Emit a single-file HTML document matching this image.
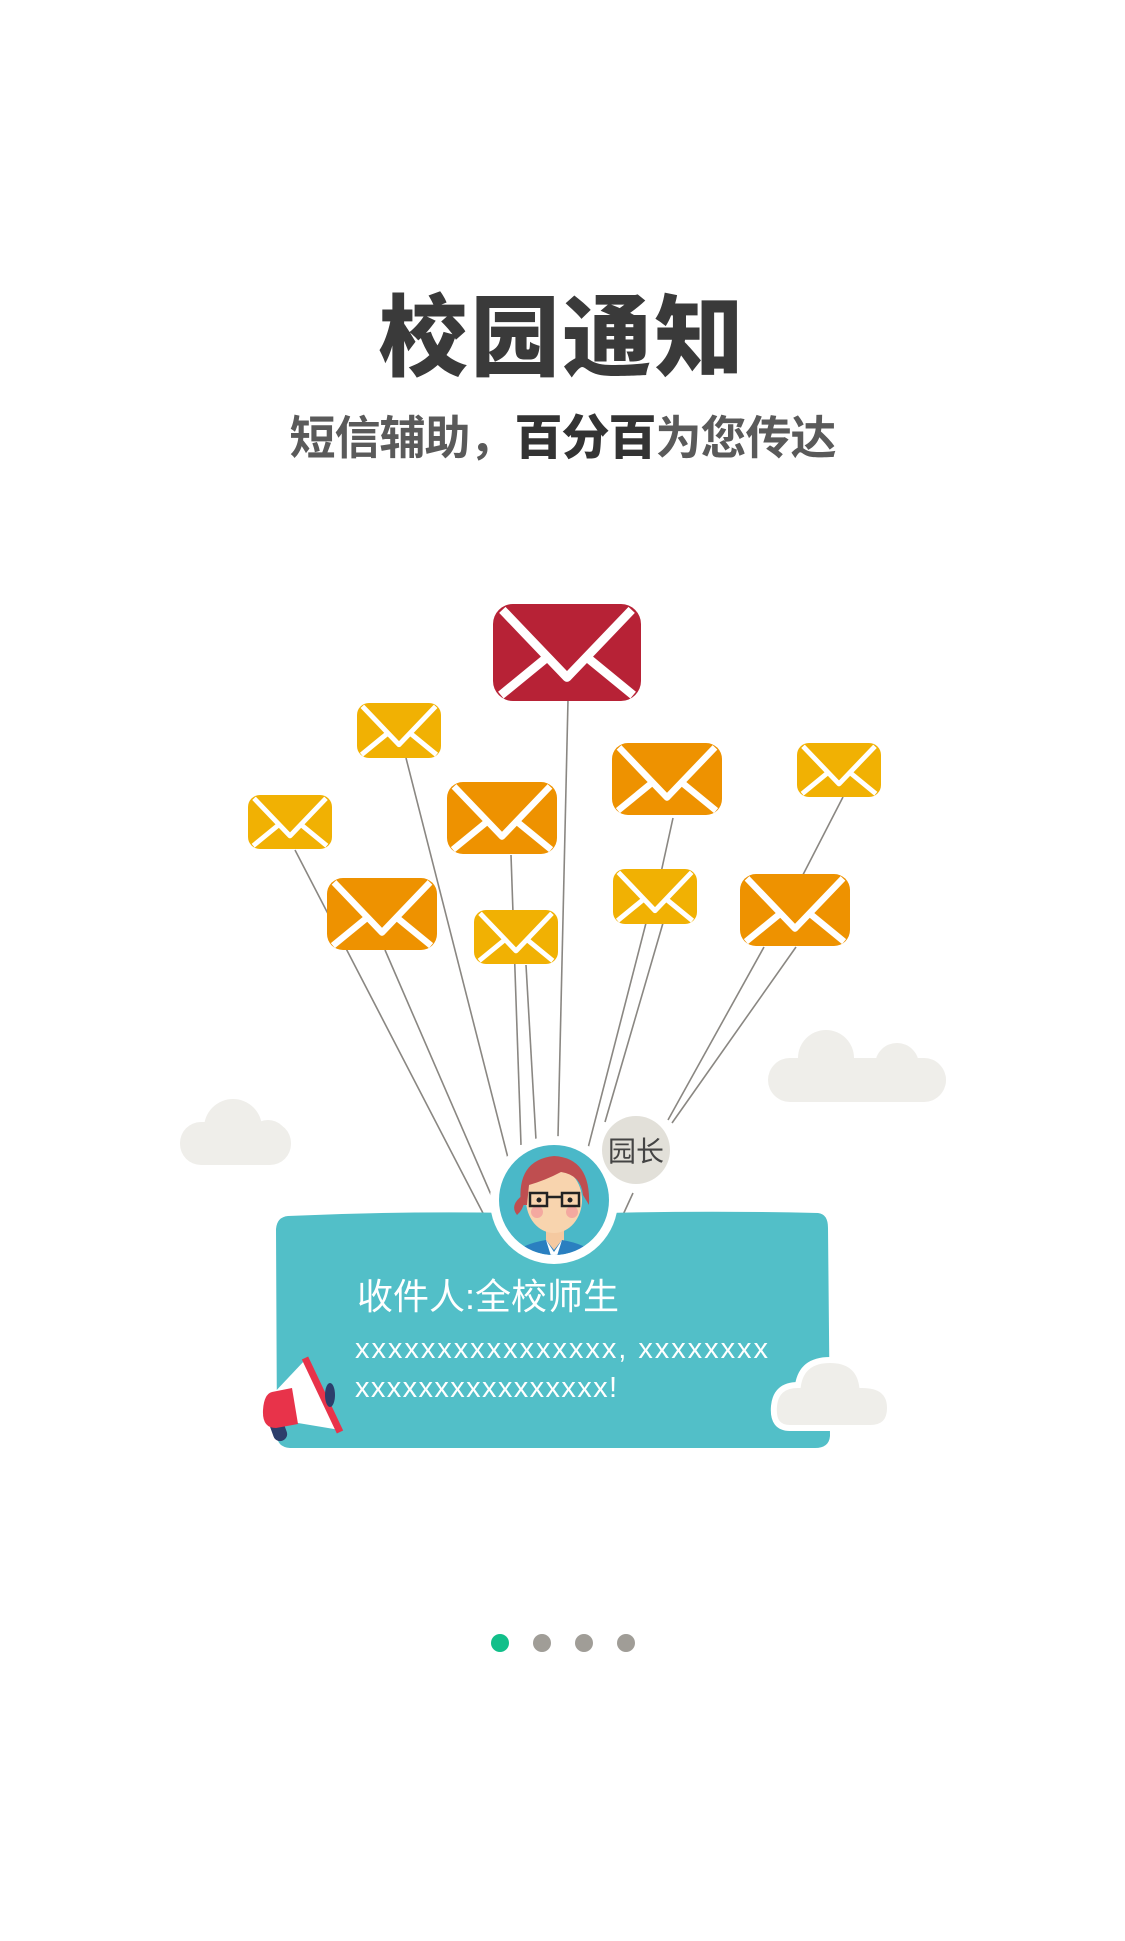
<!DOCTYPE html>
<html><head><meta charset="utf-8">
<style>
html,body{margin:0;padding:0;background:#fff;}
body{width:1125px;height:1941px;position:relative;overflow:hidden;font-family:"Liberation Sans","Noto Sans CJK SC",sans-serif;}
.t{position:absolute;left:0;width:1125px;text-align:center;}
#title{top:266px;font-size:89px;font-weight:900;color:#3a3a3a;letter-spacing:3px;}
#sub{top:398px;font-size:46px;font-weight:bold;color:#5a5a5a;letter-spacing:-1px;}
#sub b{color:#333;font-size:48px;}
svg{position:absolute;left:0;top:0;}
</style></head><body>
<div class="t" id="title">校园通知</div>
<div class="t" id="sub">短信辅助，<b>百分百</b>为您传达</div>
<svg width="1125" height="1941" viewBox="0 0 1125 1941">
<defs>
<symbol id="env" viewBox="0 0 100 66">
<path d="M6 4 L50 50 L94 4 M5 62 L38 35 M95 62 L62 35" stroke="#fff" stroke-width="6" fill="none" stroke-linejoin="round"/>
</symbol>
</defs>
<g stroke="#8a8782" stroke-width="1.6" fill="none">
<line x1="295" y1="850" x2="485" y2="1217"/>
<line x1="385" y1="950" x2="492" y2="1197"/>
<line x1="406" y1="758" x2="508" y2="1158"/>
<line x1="511" y1="855" x2="521" y2="1145"/>
<line x1="526" y1="965" x2="536" y2="1140"/>
<line x1="568" y1="700" x2="558" y2="1137"/>
<line x1="646" y1="923" x2="588" y2="1148"/>
<line x1="663" y1="923" x2="605" y2="1122"/>
<line x1="673" y1="818" x2="655" y2="900"/>
<line x1="843" y1="797" x2="790" y2="900"/>
<line x1="764" y1="947" x2="668" y2="1120"/>
<line x1="796" y1="947" x2="672" y2="1123"/>
<line x1="633" y1="1193" x2="622" y2="1217"/>
</g>
<!-- envelopes -->
<g>
<rect x="493" y="604" width="148" height="97" rx="20" fill="#b72236"/><use href="#env" x="493" y="604" width="148" height="97"/>
<rect x="357" y="703" width="84" height="55" rx="12" fill="#f1b103"/><use href="#env" x="357" y="703" width="84" height="55"/>
<rect x="248" y="795" width="84" height="54" rx="12" fill="#f1b103"/><use href="#env" x="248" y="795" width="84" height="54"/>
<rect x="447" y="782" width="110" height="72" rx="16" fill="#ee9200"/><use href="#env" x="447" y="782" width="110" height="72"/>
<rect x="612" y="743" width="110" height="72" rx="16" fill="#ee9200"/><use href="#env" x="612" y="743" width="110" height="72"/>
<rect x="474" y="910" width="84" height="54" rx="12" fill="#f1b103"/><use href="#env" x="474" y="910" width="84" height="54"/>
<rect x="613" y="869" width="84" height="55" rx="12" fill="#f1b103"/><use href="#env" x="613" y="869" width="84" height="55"/>
<rect x="797" y="743" width="84" height="54" rx="12" fill="#f1b103"/><use href="#env" x="797" y="743" width="84" height="54"/>
<rect x="327" y="878" width="110" height="72" rx="16" fill="#ee9200"/><use href="#env" x="327" y="878" width="110" height="72"/>
<rect x="740" y="874" width="110" height="72" rx="16" fill="#ee9200"/><use href="#env" x="740" y="874" width="110" height="72"/>
</g>
<!-- clouds -->
<g fill="#efeeea">
<rect x="180" y="1122" width="111" height="43" rx="21"/><circle cx="233" cy="1128" r="29"/><circle cx="268" cy="1140" r="20"/>
<rect x="768" y="1058" width="178" height="44" rx="22"/><circle cx="826" cy="1058" r="28"/><circle cx="897" cy="1065" r="22"/><circle cx="928" cy="1080" r="18"/>
</g>
<!-- card -->
<path d="M288 1216 Q420 1210 560 1214 Q700 1210 818 1213 Q828 1214 828 1228 L830 1436 Q829 1448 815 1448 L290 1448 Q277 1447 277 1435 L276 1229 Q277 1217 288 1216Z" fill="#52bfc8"/>
<text x="357" y="1309" font-size="36" fill="#fff" font-family="Liberation Sans,Noto Sans CJK SC,sans-serif">收件人:全校师生</text>
<text x="355" y="1358" font-size="29" fill="#fff" font-family="Liberation Sans,sans-serif" textLength="413">xxxxxxxxxxxxxxxx, xxxxxxxx</text>
<text x="355" y="1397" font-size="29" fill="#fff" font-family="Liberation Sans,sans-serif" textLength="262">xxxxxxxxxxxxxxxx!</text>
<!-- cloud bottom right -->
<g fill="#efeeea" stroke="#fff" stroke-width="6">
<path d="M790 1428 Q772 1428 774 1406 Q776 1385 798 1385 Q802 1360 830 1360 Q858 1360 862 1385 Q890 1385 890 1408 Q890 1428 870 1428Z"/>
</g>
<!-- megaphone -->
<g>
<rect x="268" y="1400" width="14" height="42" rx="7" fill="#2c3e6b" transform="rotate(-20 275 1420)"/>
<polygon points="305,1360 340,1430 280,1420 272,1395" fill="#fff"/>
<line x1="305" y1="1358" x2="340" y2="1432" stroke="#e8334a" stroke-width="7"/>
<path d="M272 1392 L292 1388 L298 1424 L276 1428 Q262 1428 263 1410 Q264 1394 272 1392Z" fill="#e8334a"/>
<ellipse cx="330" cy="1395" rx="5" ry="12" fill="#2c3e6b"/>
</g>
<!-- avatar -->
<circle cx="554" cy="1200" r="64" fill="#fff"/>
<circle cx="554" cy="1200" r="55" fill="#4ab8c8"/>
<clipPath id="av"><circle cx="554" cy="1200" r="55"/></clipPath>
<g clip-path="url(#av)">
<rect x="546" y="1225" width="18" height="25" fill="#f5c9a0"/>
<path d="M506 1262 Q516 1245 546 1240 L554 1250 L562 1240 Q592 1245 602 1262Z" fill="#2a7fc0"/>
<path d="M546 1240 L554 1252 L562 1240 L557 1256 L551 1256Z" fill="#fff"/>
<ellipse cx="554" cy="1200" rx="28" ry="33" fill="#f8d4ae"/>
<path d="M521 1205 Q516 1160 554 1156 Q591 1158 589 1205 L583 1195 Q581 1175 561 1172 Q546 1180 529 1185 L527 1205Z" fill="#bf4e50"/>
<path d="M523 1195 Q509 1205 517 1215 Q523 1210 525 1200Z" fill="#bf4e50"/>
<circle cx="537" cy="1212" r="6" fill="#f4a9a0"/><circle cx="572" cy="1212" r="6" fill="#f4a9a0"/>
<rect x="530" y="1193" width="17" height="13" fill="none" stroke="#222" stroke-width="2.5"/>
<rect x="562" y="1193" width="17" height="13" fill="none" stroke="#222" stroke-width="2.5"/>
<line x1="547" y1="1197" x2="562" y2="1197" stroke="#222" stroke-width="2.5"/>
<circle cx="539" cy="1200" r="2.5" fill="#222"/><circle cx="570" cy="1200" r="2.5" fill="#222"/>
</g>
<!-- 园长 -->
<circle cx="636" cy="1150" r="37" fill="#fff"/>
<circle cx="636" cy="1150" r="34" fill="#e2e0d9"/>
<text x="636" y="1161" font-size="28" fill="#444" text-anchor="middle" font-family="Noto Sans CJK SC,sans-serif">园长</text>
<!-- dots -->
<circle cx="500" cy="1643" r="9" fill="#12bf8a"/>
<circle cx="542" cy="1643" r="9" fill="#a09d97"/>
<circle cx="584" cy="1643" r="9" fill="#a09d97"/>
<circle cx="626" cy="1643" r="9" fill="#a09d97"/>
</svg>
</body></html>
